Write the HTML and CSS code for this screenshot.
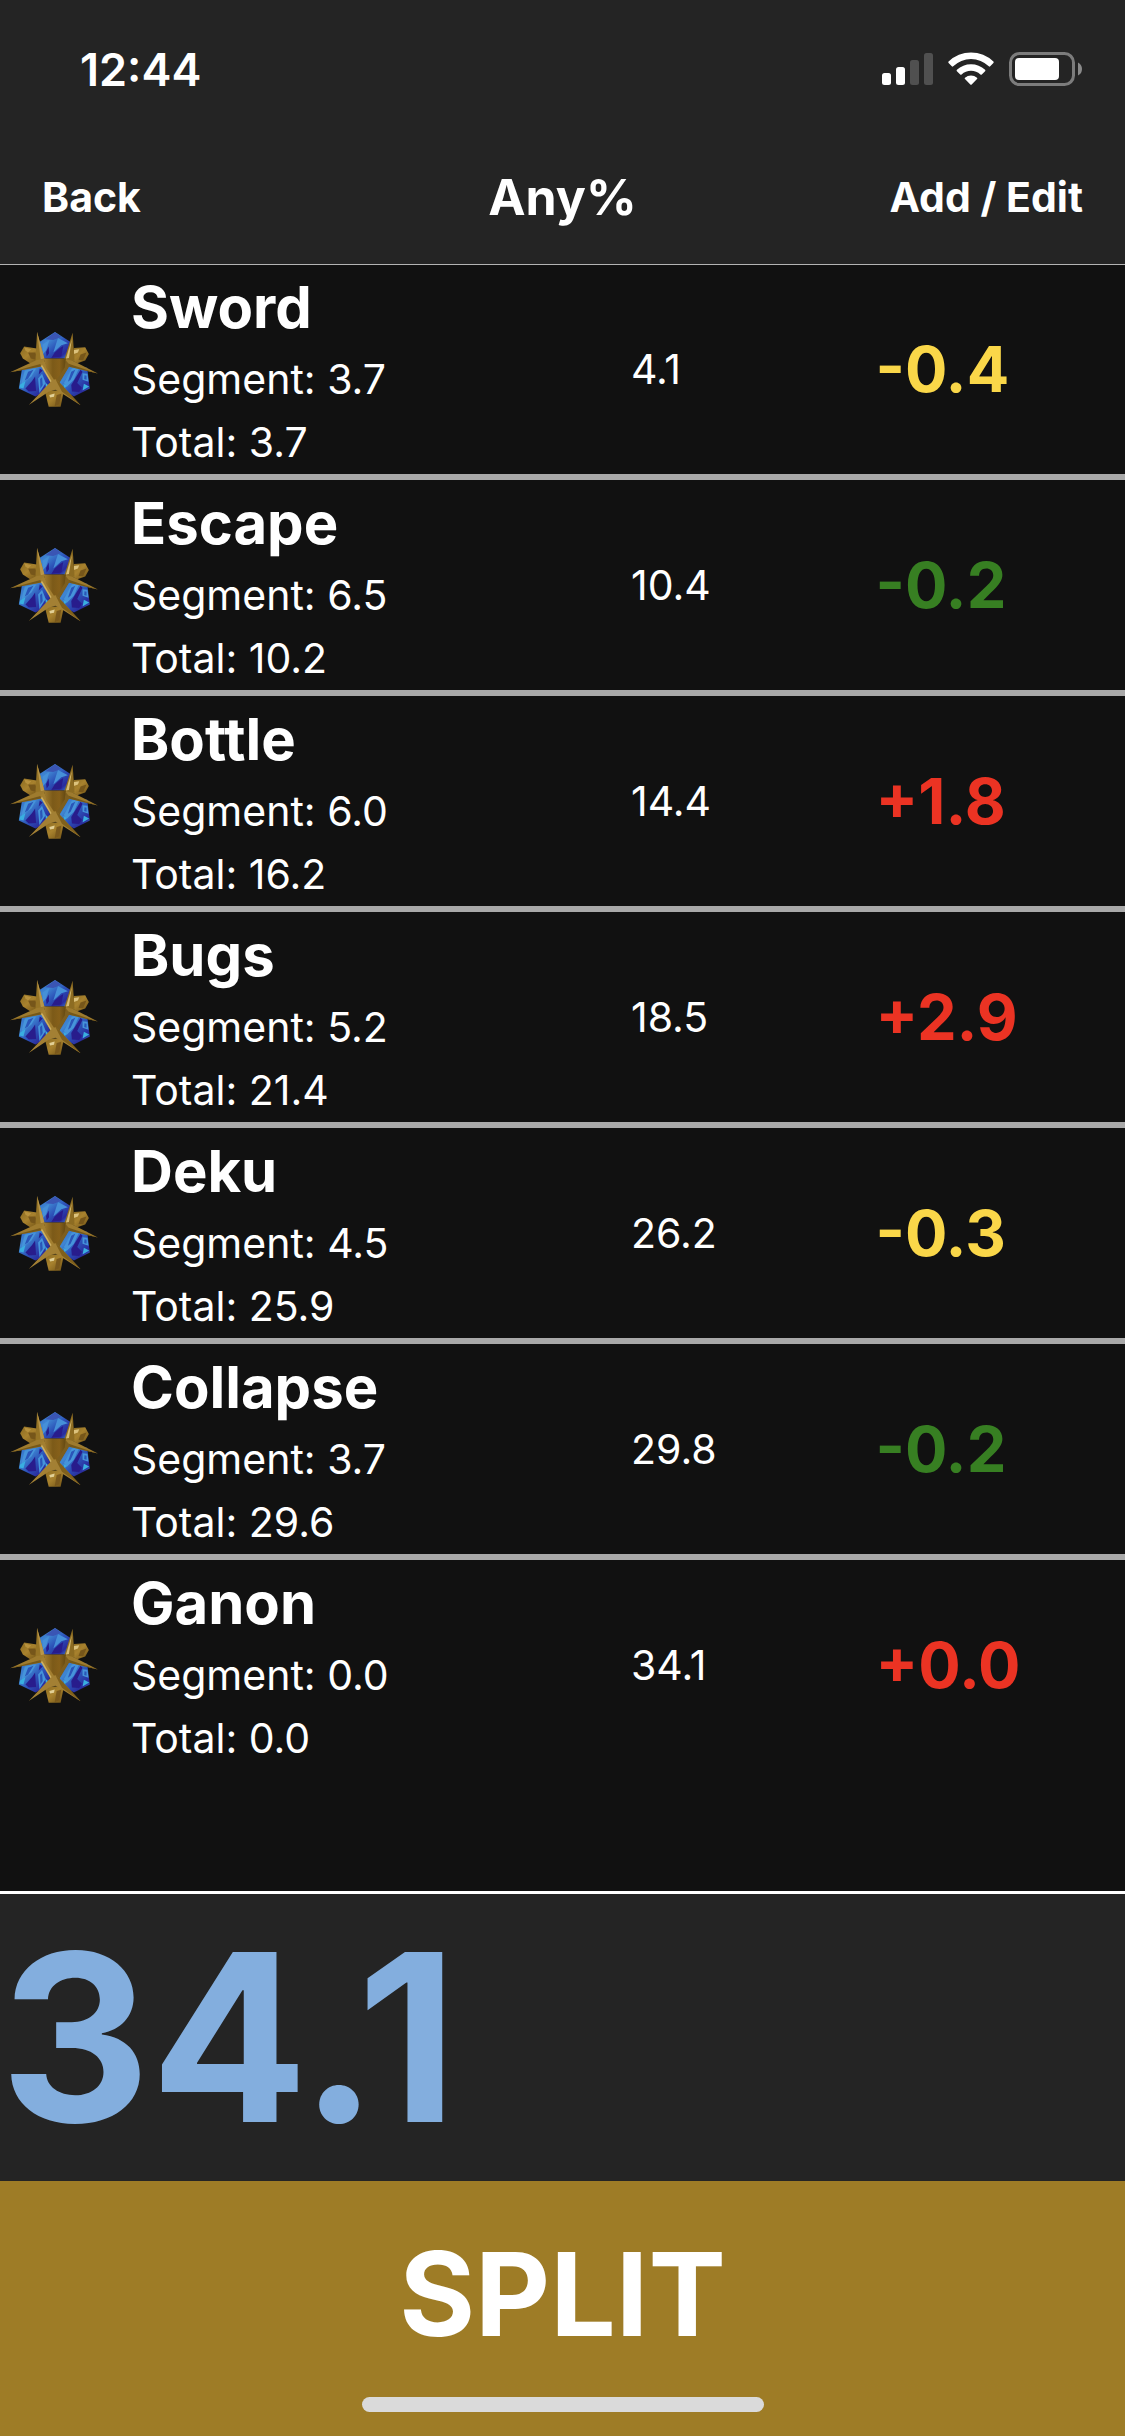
FILE: index.html
```html
<!DOCTYPE html>
<html lang="en">
<head>
<meta charset="utf-8">
<meta name="viewport" content="width=device-width, initial-scale=1">
<title>Any% splits</title>
<link rel="stylesheet" href="styles.css">
</head>
<body>
<svg class="defs" aria-hidden="true">
  <defs>
    <linearGradient id="blue" x1="0" y1="0" x2="1" y2="1">
      <stop offset="0" stop-color="#2f62c4"/><stop offset=".3" stop-color="#3f86d2"/><stop offset=".55" stop-color="#2c52b8"/><stop offset=".8" stop-color="#2a2a9c"/><stop offset="1" stop-color="#3c9ad8"/>
    </linearGradient>
    <linearGradient id="gold" x1="0" y1="0" x2="1" y2="1">
      <stop offset="0" stop-color="#8a6a20"/><stop offset=".45" stop-color="#a8822e"/><stop offset="1" stop-color="#6e5014"/>
    </linearGradient>
    <linearGradient id="core" x1="0" y1="0" x2="1" y2="0">
      <stop offset="0" stop-color="#a07c30"/><stop offset=".4" stop-color="#7c5a18"/><stop offset=".7" stop-color="#86601a"/><stop offset="1" stop-color="#624812"/>
    </linearGradient>
  </defs>
  <symbol id="medal" viewBox="30 36 264 226">
    <path fill="url(#gold)" d="M72 80 110 86 120 124 90 130 68 116 60 100Z"/>
    <path fill="#76561a" d="M84 98 106 98 112 120 92 116Z"/>
    <path fill="#b8923e" d="M72 82 94 88 84 98 76 92Z"/>
    <path fill="url(#gold)" d="M222 84 256 82 267 102 256 122 232 130 214 120Z"/>
    <path fill="#dcc27c" d="M222 90 238 88 234 98 222 102Z"/>
    <path fill="#76561a" d="M242 104 260 98 250 120 236 120Z"/>
    <path fill="url(#blue)" d="M165 36 212 66 206 116 124 116 118 66Z"/>
    <path fill="#4690d8" d="M128 74 148 60 138 92 126 106ZM174 54 204 70 184 76 160 98 168 72Z"/>
    <path fill="#3a55b4" d="M165 37 184 50 160 60 136 58Z"/>
    <path fill="#281c8c" d="M180 84 190 78 184 110 154 114 164 98ZM138 96 146 80 147 100 140 110Z"/>
    <path fill="url(#blue)" d="M66 144 124 136 150 186 142 212 106 230 56 206Z"/>
    <path fill="#4694da" d="M74 152 108 146 94 170 64 192ZM114 176 126 162 137 190 118 220Z"/>
    <path fill="#2a55b8" d="M84 156 100 150 84 176 74 182ZM120 178 126 172 128 196 121 206Z"/>
    <path fill="#281c8c" d="M96 184 105 170 108 214 86 215 76 206ZM119 146 128 152 116 164Z"/>
    <path fill="#3aaee0" d="M60 194 76 184 70 206 58 203ZM136 188 146 198 138 208Z"/>
    <path fill="url(#blue)" d="M208 136 262 144 270 206 222 230 184 206 178 186Z"/>
    <path fill="#4694da" d="M216 146 238 144 222 180 200 202 192 190ZM248 160 263 162 266 186 248 180Z"/>
    <path fill="#2a55b8" d="M214 156 226 150 212 180 204 186ZM254 166 260 168 260 180 253 178Z"/>
    <path fill="#281c8c" d="M242 150 248 156 232 190 246 204 238 217 216 215 214 196Z"/>
    <path fill="#3aaee0" d="M252 192 268 200 248 212ZM190 192 200 198 194 206Z"/>
    <path fill="#967426" d="M111 36 133 116 134 130 106 124Z"/>
    <path fill="#b8964a" d="M111 36 133 116 122 118Z"/>
    <path fill="#8d6c22" d="M218 38 224 122 194 130 194 116Z"/>
    <path fill="#d6bc74" d="M216 56 198 116 207 114Z"/>
    <path fill="#9e7b2e" d="M30 157 110 120 136 116 126 140Z"/>
    <path fill="#755819" d="M30 157 124 132 122 140Z"/>
    <path fill="#9e7b2e" d="M294 161 222 124 192 116 206 140Z"/>
    <path fill="#755819" d="M294 161 206 132 208 141Z"/>
    <path fill="url(#gold)" d="M134 212 192 212 182 261 146 261Z"/>
    <path fill="#7a581c" d="M170 226 184 222 178 254 164 260Z"/>
    <path fill="#a37f30" d="M120 132 132 122 166 182 154 190Z"/>
    <path fill="#cdb064" d="M122 138 127 136 157 188 152 189Z"/>
    <path fill="#7d5e1e" d="M198 122 210 136 178 190 164 182Z"/>
    <path fill="url(#core)" d="M132 116 198 116 194 144 166 186 138 144Z"/>
    <path fill="#a38034" d="M86 256 152 186 166 178 180 190 242 257 184 220 166 210 146 216Z"/>
    <path fill="#80601c" d="M166 178 180 190 242 257 186 216Z"/>
    <path fill="#e2d096" d="M148 226 164 221 162 231 150 233Z"/>
  </symbol>
</svg>

<div class="app">
  <header class="header">
    <div class="status">
      <time class="clock">12:44</time>
      <svg class="indicators" viewBox="0 0 200 34" role="img" aria-label="Signal, Wi-Fi and battery">
        <g fill="#fff">
          <rect x="0" y="21" width="9" height="12" rx="2.5"/>
          <rect x="14" y="15" width="9" height="18" rx="2.5"/>
          <rect x="28" y="8" width="9" height="25" rx="2.5" fill="#505050"/>
          <rect x="42" y="1" width="9" height="32" rx="2.5" fill="#505050"/>
          <path d="M66.6 9.6a32 32 0 0 1 44.8 0q.6.7 0 1.4l-3.2 3.3q-.7.7-1.4 0a25.5 25.5 0 0 0-35.600 0q-.7.7-1.4 0l-3.2-3.3q-.6-.7 0-1.4Z"/>
          <path d="M74.9 17.8a20.5 20.5 0 0 1 28.2 0q.7.7 0 1.4l-3.3 3.3q-.7.6-1.4 0a13.7 13.7 0 0 0-18.8 0q-.7.6-1.4 0l-3.3-3.3q-.7-.7 0-1.4Z"/>
          <path d="M83 25.7a9.4 9.4 0 0 1 12 0q.8.7 0 1.4l-5.3 5.4q-.7.7-1.4 0L83 27.1q-.8-.7 0-1.4Z"/>
          <rect x="133" y="6" width="44" height="22" rx="4"/>
        </g>
        <rect x="128.5" y="1.5" width="63" height="31" rx="9" fill="none" stroke="#7c7c7c" stroke-width="3"/>
        <path d="M196 10.5q4 2 4 6.5t-4 6.5Z" fill="#8a8a8a"/>
      </svg>
    </div>
    <nav class="nav">
      <button class="nav-button" type="button">Back</button>
      <h1 class="title">Any%</h1>
      <button class="nav-button nav-end" type="button">Add / Edit</button>
    </nav>
  </header>

  <main class="list">
    <table class="splits">
      <colgroup><col class="col-icon"><col class="col-name"><col class="col-time"><col class="col-delta"></colgroup>
      <tbody>
        <tr>
          <td class="icon-cell"><svg class="medal" aria-hidden="true"><use href="#medal"/></svg></td>
          <td class="name-cell"><h2 class="name">Sword</h2><p class="detail">Segment: 3.7</p><p class="detail">Total: 3.7</p></td>
          <td class="split-time">4.1</td><td class="delta best">-0.4</td>
        </tr>
        <tr>
          <td class="icon-cell"><svg class="medal" aria-hidden="true"><use href="#medal"/></svg></td>
          <td class="name-cell"><h2 class="name">Escape</h2><p class="detail">Segment: 6.5</p><p class="detail">Total: 10.2</p></td>
          <td class="split-time">10.4</td><td class="delta ahead">-0.2</td>
        </tr>
        <tr>
          <td class="icon-cell"><svg class="medal" aria-hidden="true"><use href="#medal"/></svg></td>
          <td class="name-cell"><h2 class="name">Bottle</h2><p class="detail">Segment: 6.0</p><p class="detail">Total: 16.2</p></td>
          <td class="split-time">14.4</td><td class="delta behind">+1.8</td>
        </tr>
        <tr>
          <td class="icon-cell"><svg class="medal" aria-hidden="true"><use href="#medal"/></svg></td>
          <td class="name-cell"><h2 class="name">Bugs</h2><p class="detail">Segment: 5.2</p><p class="detail">Total: 21.4</p></td>
          <td class="split-time">18.5</td><td class="delta behind">+2.9</td>
        </tr>
        <tr>
          <td class="icon-cell"><svg class="medal" aria-hidden="true"><use href="#medal"/></svg></td>
          <td class="name-cell"><h2 class="name">Deku</h2><p class="detail">Segment: 4.5</p><p class="detail">Total: 25.9</p></td>
          <td class="split-time">26.2</td><td class="delta best">-0.3</td>
        </tr>
        <tr>
          <td class="icon-cell"><svg class="medal" aria-hidden="true"><use href="#medal"/></svg></td>
          <td class="name-cell"><h2 class="name">Collapse</h2><p class="detail">Segment: 3.7</p><p class="detail">Total: 29.6</p></td>
          <td class="split-time">29.8</td><td class="delta ahead">-0.2</td>
        </tr>
        <tr>
          <td class="icon-cell"><svg class="medal" aria-hidden="true"><use href="#medal"/></svg></td>
          <td class="name-cell"><h2 class="name">Ganon</h2><p class="detail">Segment: 0.0</p><p class="detail">Total: 0.0</p></td>
          <td class="split-time">34.1</td><td class="delta behind">+0.0</td>
        </tr>
      </tbody>
    </table>
  </main>

  <footer class="footer">
    <output class="timer">34.1</output>
    <button class="split-button" type="button">SPLIT</button>
    <span class="home-indicator"></span>
  </footer>
</div>
</body>
</html>
```
FILE: styles.css
```css
* {
  box-sizing: border-box;
  margin: 0;
  padding: 0;
}

body {
  background: #111;
  color: #fff;
  font-family: Inter, "Liberation Sans", sans-serif;
}

button {
  border: 0;
  background: none;
  color: inherit;
  font-family: inherit;
}

.defs {
  position: absolute;
  width: 0;
  height: 0;
}

.app {
  display: flex;
  flex-direction: column;
  min-height: 100vh;
}

/* Header */
.header {
  position: relative;
  background: #242424;
  box-shadow: 0 1px 0 #b4b4b4;
}

.status {
  display: flex;
  align-items: center;
  justify-content: space-between;
  height: 132px;
  padding: 6px 43px 0 80px;
}

.clock {
  font-size: 45px;
  font-weight: 600;
}

.indicators {
  width: 200px;
  height: 34px;
}

.nav {
  display: grid;
  grid-template-columns: 1fr auto 1fr;
  align-items: center;
  height: 132px;
  padding: 0 42px 2px;
}

.nav-button {
  justify-self: start;
  font-size: 41px;
  font-weight: 700;
}

.nav-end {
  justify-self: end;
}

.title {
  font-size: 50px;
  font-weight: 700;
}

/* Splits */
.list {
  flex: 1;
}

.splits {
  width: 100%;
  table-layout: fixed;
  border-spacing: 0;
}

.col-icon {
  width: 131px;
}

.col-name {
  width: 44%;
}

.splits td {
  border-bottom: 6px solid #a9a9a9;
  vertical-align: middle;
}

.splits tr:last-child td {
  border-bottom: 0;
}

.splits .icon-cell {
  padding-left: 10px;
}

.medal {
  display: block;
  width: 88px;
  height: 75px;
}

.splits .name-cell {
  padding-top: 2px;
}

.name {
  font-size: 58px;
  font-weight: 700;
  line-height: 82px;
}

.detail {
  font-size: 41px;
  line-height: 63px;
}

.splits .split-time {
  padding-left: 5px;
  font-size: 41px;
}

.delta {
  font-size: 63px;
  font-weight: 700;
}

.best {
  color: #fad749;
}

.ahead {
  color: #377f22;
}

.behind {
  color: #eb3323;
}

/* Footer */
.footer {
  position: relative;
  display: flex;
  flex-direction: column;
  border-top: 3px solid #fff;
  background: #242424;
}

.timer {
  color: #83aede;
  font-size: 233px;
  font-weight: 700;
  line-height: 287px;
}

.split-button {
  height: 255px;
  padding-bottom: 30px;
  background: #9e7c26;
  font-size: 116px;
  font-weight: 700;
}

.home-indicator {
  position: absolute;
  bottom: 24px;
  left: 50%;
  width: 402px;
  height: 15px;
  margin-left: -201px;
  border-radius: 8px;
  background: #dadada;
}
```
